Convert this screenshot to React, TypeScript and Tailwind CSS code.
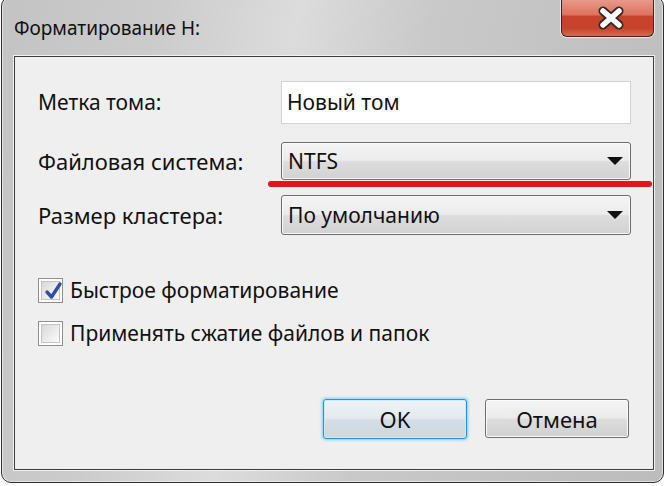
import React from "react";

const font = "font-['Noto_Sans','Open_Sans',sans-serif]";

function Arrow() {
  return (
    <svg width="16" height="9" viewBox="0 0 16 9" className="ml-auto mr-[7px]">
      <path d="M0 0 H16 L8 8 Z" fill="#111" />
    </svg>
  );
}

function Combo({ value }: { value: string }) {
  return (
    <div className="flex h-full w-[350px] items-center rounded-[3px] border border-[#6c6c6c] bg-[linear-gradient(#f4f4f4_0%,#ececec_48%,#dddddd_52%,#d2d2d2_100%)] pl-[6px] shadow-[inset_0_0_0_1px_#fafafa]">
      <span className="text-[21px] leading-none text-[#111]">{value}</span>
      <Arrow />
    </div>
  );
}

function Check({ checked }: { checked?: boolean }) {
  return (
    <div className="flex h-[25px] w-[25px] items-center justify-center border border-[#8e8f8f] bg-white p-[2px]">
      <div className="relative h-full w-full border border-[#c4c4c4] bg-[linear-gradient(135deg,#d8d8d8_0%,#eeeeee_60%,#fbfbfb_100%)]">
        {checked && (
          <svg viewBox="0 0 20 20" className="absolute left-[1px] top-[-1px] h-[20px] w-[20px]">
            <path d="M4 11 L8.5 16 L17 3" fill="none" stroke="#2f4ea6" strokeWidth="3.4" strokeLinejoin="round" strokeLinecap="round" />
          </svg>
        )}
      </div>
    </div>
  );
}

export default function App() {
  return (
    <div className={`h-[486px] w-[666px] overflow-hidden bg-white ${font}`}>
      <div className="ml-[1px] -mt-[4px] flex h-[487px] w-[663px] flex-col rounded-[10px] border border-[#2e2e2e] bg-[linear-gradient(100deg,#c3c3c3_0%,#cccccc_22%,#dcdcdc_40%,#c9c9c9_58%,#bcbcbc_100%)] pb-[12px] pl-[12px] pr-[9px] shadow-[inset_0_0_0_1px_rgba(255,255,255,0.55)]">
        {/* заголовок */}
        <div className="flex h-[59px] shrink-0 items-start justify-between">
          <span className="mt-[22px] text-[19px] leading-none text-[#111]">Форматирование H:</span>
          <div className="flex h-[40px] w-[93px] items-center justify-center rounded-b-[6px] border border-t-0 border-[#3e2520] bg-[linear-gradient(#eaa193_0%,#de735f_45%,#c8432b_50%,#c4442d_80%,#d56a52_100%)] shadow-[0_0_0_1px_rgba(255,255,255,0.6)]">
            <svg width="30" height="24" viewBox="0 0 30 24" className="ml-[6px] mt-[3px]">
              <path d="M7 5 L23 19 M23 5 L7 19" stroke="#3a2622" strokeWidth="9" strokeLinecap="round" />
              <path d="M7 5 L23 19 M23 5 L7 19" stroke="#ffffff" strokeWidth="5.5" strokeLinecap="round" />
            </svg>
          </div>
        </div>

        {/* клиентская область */}
        <div className="relative flex flex-1 flex-col border border-[#3c3c3c] bg-[#efefef] pl-[23px] pr-[22px] pt-[24px] text-[#111] shadow-[0_0_0_1px_#f2f2f2]">
          <div className="grid h-[43px] grid-cols-[243px_350px] items-center">
            <span className="text-[21px] leading-none">Метка тома:</span>
            <div className="flex h-full items-center border border-[#d2d2d2] bg-white pl-[5px]">
              <span className="text-[21px] leading-none">Новый том</span>
            </div>
          </div>
          <div className="mt-[18px] grid h-[38px] grid-cols-[243px_350px] items-center">
            <span className="text-[22px] leading-none">Файловая система:</span>
            <Combo value="NTFS" />
          </div>
          <div className="mt-[15px] grid h-[40px] grid-cols-[243px_350px] items-center">
            <span className="text-[22px] leading-none">Размер кластера:</span>
            <Combo value="По умолчанию" />
          </div>

          <div className="mt-[43px] flex h-[25px] items-center gap-[7px]">
            <Check checked />
            <span className="text-[21px] leading-none">Быстрое форматирование</span>
          </div>
          <div className="mt-[18px] flex h-[24px] items-center gap-[7px]">
            <Check />
            <span className="text-[21px] leading-none">Применять сжатие файлов и папок</span>
          </div>

          <div className="mt-[54px] flex justify-end gap-[18px] pr-[2px]">
            <button className="flex h-[40px] w-[144px] items-center justify-center rounded-[3px] border border-[#2f8fd2] bg-[linear-gradient(#eef3f7_0%,#e4eaef_48%,#d5dee5_52%,#cbd6de_100%)] text-[22px] leading-none text-[#111] shadow-[0_0_3px_1px_#7fd0f5,inset_0_0_0_1px_#c6ebfb]">
              OK
            </button>
            <button className="flex h-[39px] w-[144px] items-center justify-center rounded-[3px] border border-[#6e6e6e] bg-[linear-gradient(#f3f3f3_0%,#ebebeb_48%,#dddddd_52%,#d0d0d0_100%)] text-[22px] leading-none text-[#111] shadow-[inset_0_0_0_1px_#fbfbfb]">
              Отмена
            </button>
          </div>

          {/* красная линия-пометка */}
          <div className="absolute left-[253px] top-[124px] h-[6px] w-[384px] rounded-full bg-[#e2141c]" />
        </div>
      </div>
    </div>
  );
}
